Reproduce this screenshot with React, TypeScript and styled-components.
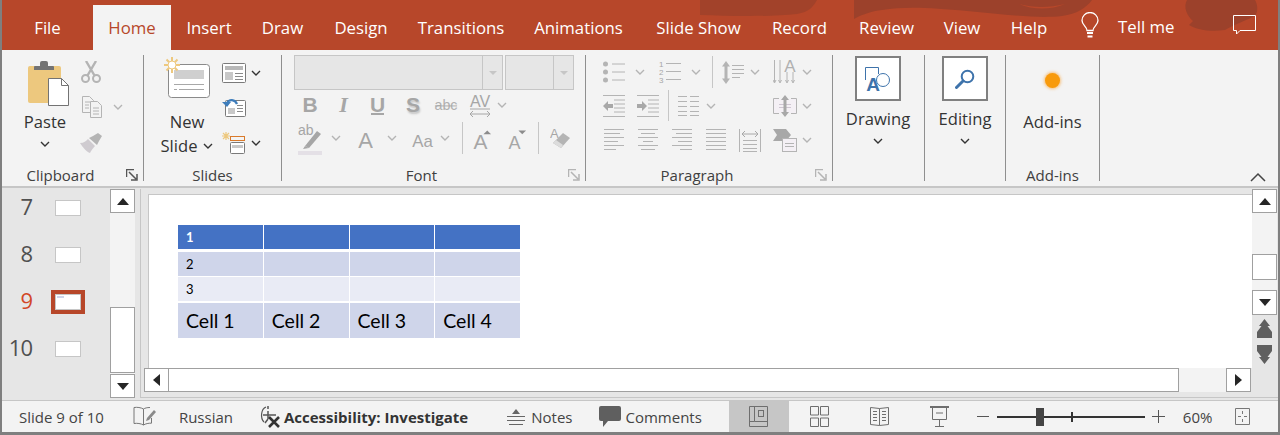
import styled, { createGlobalStyle } from "styled-components";

const UI_FONT = `"Open Sans", "Noto Sans", sans-serif`;
const OFF = "#b4b4b4";
const LINE = "#7a7a7a";

const GlobalStyle = createGlobalStyle`
	html, body {
		margin: 0;
		padding: 0;
		overflow: hidden;
		background: #f3f3f3;
	}
`;

const Window = styled.div`
	box-sizing: border-box;
	display: flex;
	flex-direction: column;
	width: 1280px;
	height: 435px;
	border: solid #7f7f7f;
	border-width: 0 2px 3px;
	font-family: ${UI_FONT};
	color: #3c3c3c;
	overflow: hidden;
`;

const TitleBar = styled.header`
	position: relative;
	display: flex;
	flex: none;
	height: 50px;
	background: #b7472a;
	overflow: hidden;
`;

const Blobs = styled.svg`
	position: absolute;
	left: 0;
	top: 0;
`;

const Tab = styled.div<{ $w: number; $active?: boolean }>`
	position: relative;
	width: ${({ $w }) => $w}px;
	height: 45px;
	margin-top: 5px;
	font-size: 16.8px;
	line-height: 46px;
	text-align: center;
	color: ${({ $active }) => ($active ? "#b7472a" : "#fff")};
	background: ${({ $active }) => ($active ? "#f3f3f3" : "transparent")};
`;

const TitleGlyph = styled.span<{ $ml: number }>`
	position: relative;
	display: flex;
	align-items: center;
	margin-left: ${({ $ml }) => $ml}px;
`;

const TellMe = styled.span`
	position: relative;
	width: 56px;
	margin-left: 19px;
	font-size: 16.8px;
	line-height: 54px;
	color: #fff;
	white-space: nowrap;
`;

const Ribbon = styled.div`
	display: flex;
	flex: none;
	box-sizing: border-box;
	height: 138px;
	background: #f3f3f3;
	border-bottom: 2px solid #c6c6c6;
`;

const Group = styled.section<{ $w: number }>`
	position: relative;
	box-sizing: border-box;
	display: flex;
	flex-direction: column;
	flex: none;
	width: ${({ $w }) => $w}px;
	height: 126px;
	margin-top: 5px;
	border-right: 1px solid #8f8f8f;
`;

const GroupBody = styled.div`
	display: flex;
	flex: 1;
	min-height: 0;
`;

const GroupStack = styled.div`
	display: flex;
	flex-direction: column;
	flex: 1;
`;

const GroupLabel = styled.div<{ $pr?: number }>`
	height: 12px;
	padding-right: ${({ $pr }) => $pr ?? 0}px;
	font-size: 15px;
	line-height: 12px;
	text-align: center;
	color: #404040;
	white-space: nowrap;
`;

const Launcher = styled.svg`
	position: absolute;
	right: 5px;
	bottom: 0;
`;

const BigButton = styled.div<{ $w: number; $ml: number }>`
	display: flex;
	flex-direction: column;
	align-items: center;
	flex: none;
	width: ${({ $w }) => $w}px;
	margin-left: ${({ $ml }) => $ml}px;
`;

const BigIcon = styled.div<{ $h: number; $top: number; $shift?: number }>`
	display: flex;
	align-items: center;
	justify-content: center;
	height: ${({ $h }) => $h}px;
	margin-top: ${({ $top }) => $top}px;
	margin-left: ${({ $shift }) => $shift ?? 0}px;
`;

const BigText = styled.div<{ $top?: number }>`
	display: flex;
	align-items: center;
	gap: 6px;
	height: 24px;
	margin-top: ${({ $top }) => $top ?? 0}px;
	font-size: 16.6px;
	line-height: 24px;
	color: #333;
	white-space: nowrap;
`;

const ChevronRow = styled.div<{ $top?: number }>`
	display: flex;
	justify-content: center;
	margin-top: ${({ $top }) => $top ?? 7}px;
`;

const ToolColumn = styled.div`
	display: flex;
	flex-direction: column;
	flex: none;
`;

const ToolRow = styled.div<{ $h: number }>`
	display: flex;
	align-items: center;
	height: ${({ $h }) => $h}px;
`;

const Tool = styled.span<{ $w: number; $ml?: number }>`
	display: flex;
	align-items: center;
	justify-content: center;
	flex: none;
	width: ${({ $w }) => $w}px;
	margin-left: ${({ $ml }) => $ml ?? 0}px;
`;

const Letter = styled(Tool)<{ $italic?: boolean; $serif?: boolean }>`
	font-family: ${({ $serif }) => ($serif ? `"Liberation Serif", serif` : `"Liberation Sans", sans-serif`)};
	font-size: ${({ $serif }) => ($serif ? 22 : 21)}px;
	font-weight: 700;
	font-style: ${({ $italic }) => ($italic ? "italic" : "normal")};
	line-height: 20px;
	color: #a6a6a6;
`;

const UnderLetter = styled(Letter)`
	border-bottom: 2px solid #a6a6a6;
	line-height: 17px;
	height: 17px;
`;

const ShadowLetter = styled(Letter)`
	text-shadow: 1px 2px 2px #c4c4c4;
`;

const ToolSep = styled.span<{ $ml: number; $h: number }>`
	flex: none;
	width: 1px;
	height: ${({ $h }) => $h}px;
	margin-left: ${({ $ml }) => $ml}px;
	background: #c6c6c6;
`;

const ComboRow = styled.div`
	display: flex;
	gap: 2px;
	height: 35px;
	padding-left: 12px;
`;

const Combo = styled.div<{ $w: number }>`
	box-sizing: border-box;
	display: flex;
	justify-content: flex-end;
	width: ${({ $w }) => $w}px;
	background: #e6e6e6;
	border: 1.5px solid #c6c6c6;
`;

const ComboArrow = styled.div`
	display: flex;
	align-items: center;
	justify-content: center;
	width: 19px;
	border-left: 1px solid #c6c6c6;
	&::after {
		content: "";
		border: solid transparent;
		border-width: 4px 4px 0;
		border-top-color: #c6c6c6;
	}
`;

const ShapeBox = styled.div`
	box-sizing: border-box;
	display: flex;
	align-items: center;
	justify-content: center;
	width: 46px;
	height: 45px;
	margin-top: 1px;
	background: #fff;
	border: 2px solid #808080;
`;

const AddInDot = styled.div`
	width: 15px;
	height: 15px;
	margin: 18px 0 22px;
	border-radius: 50%;
	background: #f89a0b;
	box-shadow: 0 0 3px 1px rgba(250, 170, 70, 0.7);
`;

const Collapse = styled.svg`
	position: absolute;
	left: 1249px;
	top: 172px;
`;

const Main = styled.main`
	display: flex;
	flex: 1;
	min-height: 0;
	background: #e6e6e6;
`;

const ThumbPanel = styled.nav`
	display: flex;
	flex-direction: column;
	flex: none;
	gap: 7px;
	width: 108px;
`;

const ThumbRow = styled.div`
	display: flex;
	align-items: center;
	height: 40px;
`;

const ThumbNumber = styled.span<{ $current?: boolean }>`
	width: 30px;
	font-size: 22px;
	line-height: 37px;
	height: 40px;
	text-align: right;
	letter-spacing: -1px;
	color: ${({ $current }) => ($current ? "#d24726" : "#505050")};
`;

const Thumb = styled.div<{ $current?: boolean }>`
	box-sizing: border-box;
	position: relative;
	width: 26px;
	height: 16px;
	margin-left: 23px;
	background: #fff;
	border: 1px solid #c6c6c6;
	outline: ${({ $current }) => ($current ? "4px solid #b7472a" : "none")};
	&::before {
		content: "";
		display: ${({ $current }) => ($current ? "block" : "none")};
		position: absolute;
		left: 1px;
		top: 1px;
		width: 7px;
		height: 2px;
		background: #cfd5ea;
	}
`;

const VScroll = styled.div`
	display: flex;
	flex-direction: column;
	flex: none;
	width: 25px;
	margin: 1px 0 2px;
`;

const ScrollTrack = styled.div`
	display: flex;
	flex-direction: column;
	justify-content: flex-end;
	flex: 1;
	padding-bottom: 1px;
	background: #f3f3f3;
`;

const ScrollButton = styled.div<{ $h?: number; $w?: number }>`
	box-sizing: border-box;
	display: flex;
	align-items: center;
	justify-content: center;
	flex: none;
	width: ${({ $w }) => ($w ? `${$w}px` : "100%")};
	height: ${({ $h }) => $h ?? 24}px;
	background: #fff;
	border: 1.5px solid #a0a0a0;
`;

const Workspace = styled.div`
	display: flex;
	flex-direction: column;
	flex: none;
	box-sizing: border-box;
	width: 1138px;
	height: 209px;
	margin: 1px 0 0 5px;
	border-left: 1px solid #c6c6c6;
	border-bottom: 1px solid #c6c6c6;
`;

const WorkspaceTop = styled.div`
	display: flex;
	height: 179px;
`;

const SlidePane = styled.div`
	box-sizing: border-box;
	flex: none;
	width: 1111px;
	padding: 5px 0 0 7px;
`;

const Slide = styled.div`
	box-sizing: border-box;
	height: 174px;
	padding: 30px 0 0 29px;
	background: #fff;
	border: solid #c6c6c6;
	border-width: 1px 0 0 1px;
`;

const DataTable = styled.table`
	width: 343px;
	border-collapse: separate;
	border-spacing: 0;
	table-layout: fixed;
	font-family: Lato, "Open Sans", sans-serif;
`;

const DataRow = styled.tr<{ $bg: string; $h: number; $gap: number }>`
	height: ${({ $h }) => $h}px;
	& > td {
		background: ${({ $bg }) => $bg};
		background-clip: padding-box;
		border-bottom: ${({ $gap }) => $gap}px solid #fff;
	}
`;

const DataCell = styled.td<{ $big?: boolean; $head?: boolean }>`
	box-sizing: border-box;
	padding: 0 0 0 8px;
	border-right: 1px solid #fff;
	font-size: ${({ $big }) => ($big ? 19.5 : 13)}px;
	font-weight: ${({ $head }) => ($head ? 700 : 400)};
	color: ${({ $head }) => ($head ? "#fff" : "#000")};
	line-height: 1;
`;

const RightBar = styled.div`
	display: flex;
	flex-direction: column;
	flex: none;
	width: 25px;
`;

const RightTrack = styled.div`
	display: flex;
	flex-direction: column;
	height: 77px;
	padding-top: 41px;
	box-sizing: border-box;
	background: #f3f3f3;
`;

const PageJump = styled.div`
	display: flex;
	flex-direction: column;
	align-items: center;
	gap: 7px;
	padding-top: 4px;
`;

const HScroll = styled.div`
	display: flex;
	height: 24px;
	padding-left: 3px;
`;

const HTrackWhite = styled.div`
	box-sizing: border-box;
	width: 1010px;
	background: #fff;
	border: solid #a0a0a0;
	border-width: 1.5px 1.5px 1.5px 0;
`;

const HTrackRest = styled.div`
	width: 47px;
	background: #f3f3f3;
`;

const StatusBar = styled.footer`
	box-sizing: border-box;
	display: flex;
	align-items: center;
	flex: none;
	height: 32px;
	background: #f3f3f3;
	border-top: 1px solid #c6c6c6;
	font-size: 15px;
	color: #444;
`;

const StatusText = styled.span<{ $ml?: number; $bold?: boolean }>`
	margin-left: ${({ $ml }) => $ml ?? 0}px;
	font-weight: ${({ $bold }) => ($bold ? 700 : 400)};
	color: ${({ $bold }) => ($bold ? "#333" : "#444")};
	white-space: nowrap;
`;

const StatusIcon = styled.span<{ $ml: number; $active?: boolean; $w?: number }>`
	display: flex;
	align-items: center;
	justify-content: center;
	flex: none;
	align-self: stretch;
	width: ${({ $w }) => ($w ? `${$w}px` : "auto")};
	margin-left: ${({ $ml }) => $ml}px;
	background: ${({ $active }) => ($active ? "#c6c6c6" : "transparent")};
`;

const ZoomSlider = styled.div`
	position: relative;
	flex: none;
	width: 148px;
	height: 2px;
	margin-left: 8px;
	background: #333;
`;

const ZoomThumb = styled.div`
	position: absolute;
	left: 39px;
	top: -8px;
	width: 8px;
	height: 18px;
	background: #444;
`;

const ZoomTick = styled.div`
	position: absolute;
	left: 74px;
	top: -4px;
	width: 2px;
	height: 10px;
	background: #333;
`;

const Chevron = ({ off }: { off?: boolean }) => (
	<svg width="10" height="6" viewBox="0 0 10 6">
		<path d="M1 1l4 4 4-4" fill="none" stroke={off ? OFF : "#333"} strokeWidth="1.4" />
	</svg>
);

const Tri = ({ dir }: { dir: "up" | "down" | "left" | "right" }) => {
	const d = { up: "M0 7L6 0l6 7z", down: "M0 0h12L6 7z", left: "M7 0v12L0 6z", right: "M0 0l7 6-7 6z" }[dir];
	const vertical = dir === "up" || dir === "down";
	return (
		<svg width={vertical ? 12 : 7} height={vertical ? 7 : 12} viewBox={vertical ? "0 0 12 7" : "0 0 7 12"}>
			<path d={d} fill="#262626" />
		</svg>
	);
};

const PasteIcon = () => (
	<svg width="41" height="45" viewBox="0 0 41 45">
		<rect x="0" y="5" width="33" height="37" rx="2" fill="#edc87e" />
		<path d="M6 9V6a1 1 0 0 1 1-1h5V2a2 2 0 0 1 2-2h4a2 2 0 0 1 2 2v3h5a1 1 0 0 1 1 1v3z" fill="#737373" />
		<path d="M20.500 17.500h13l7 7v20h-20z" fill="#fff" stroke="#737373" />
		<path d="M33.500 17.500v7h7" fill="none" stroke="#737373" />
	</svg>
);

const ScissorsIcon = () => (
	<svg width="20" height="22" viewBox="0 0 20 22">
		<g fill="none" stroke={OFF} strokeWidth="2">
			<circle cx="4.500" cy="17.500" r="3.500" />
			<circle cx="15.500" cy="17.500" r="3.500" />
			<path d="M6.500 14.500L15 0M13.500 14.500L5 0" strokeWidth="2.400" />
		</g>
	</svg>
);

const CopyIcon = () => (
	<svg width="20" height="22" viewBox="0 0 20 22">
		<g fill="#f3f3f3" stroke={OFF}>
			<path d="M.5.500h7l4 4v12H.5z" />
			<path d="M8.500 5.500h7l4 4v12h-11z" />
			<path d="M3 6h5M3 9h4M3 12h4M11 12h6M11 15h6M11 18h6" fill="none" />
		</g>
	</svg>
);

const BrushIcon = () => (
	<svg width="23" height="20" viewBox="0 0 23 20">
		<path d="M0 10c4 0 6-2 8-4l7 7c-2 2-4 5-5 7-3-1-7-5-10-10z" fill="#cfcbd0" />
		<path d="M9 5l4-2 5-3 4 3-3 5-2 4z" fill={OFF} />
	</svg>
);

const NewSlideIcon = () => (
	<svg width="46" height="42" viewBox="0 0 46 42">
		<rect x="4.500" y="7.500" width="41" height="33" rx="3" fill="#fff" stroke="#8a8a8a" />
		<rect x="10" y="13" width="30" height="9" fill="#cfcfcf" />
		<path d="M10 27.500h30M10 32.500h3M15 32.500h25" stroke="#a8a8a8" />
		<g stroke="#edc87e" strokeWidth="2">
			<path d="M8 0v16M0 8h16M2.500 2.500l11 11M13.500 2.500l-11 11" />
		</g>
		<circle cx="8" cy="8" r="4" fill="#fff" stroke="#edc87e" />
	</svg>
);

const LayoutIcon = () => (
	<svg width="24" height="20" viewBox="0 0 24 20">
		<rect x=".5" y=".5" width="23" height="19" rx="1" fill="#fff" stroke={LINE} />
		<rect x="3" y="3" width="18" height="4" fill="#b8b8b8" />
		<rect x="3" y="9" width="8" height="8" fill="#c8c8c8" />
		<path d="M13 10.500h8M13 13.500h8M13 16.500h8" stroke="#8a8a8a" />
	</svg>
);

const ResetIcon = () => (
	<svg width="24" height="20" viewBox="0 0 24 20">
		<rect x="3.500" y="3.500" width="20" height="16" rx="1" fill="#fff" stroke={LINE} />
		<rect x="6" y="11" width="7" height="6" fill="#c8c8c8" />
		<path d="M15 8.500h6M15 11.500h6M15 14.500h6" stroke="#8a8a8a" />
		<path d="M15 7C13 2 7 2 5 6" fill="none" stroke="#3e7dbb" strokeWidth="2.200" />
		<path d="M0 5h9L5 10z" fill="#3e7dbb" />
	</svg>
);

const SectionIcon = () => (
	<svg width="23" height="22" viewBox="0 0 23 22">
		<path d="M4 0v8M0 4h8M1 1l6 6M7 1L1 7" stroke="#edc87e" strokeWidth="1.200" />
		<rect x="8.500" y="4.500" width="14" height="4" fill="none" stroke="#d97a2b" />
		<rect x="8.500" y="10.500" width="14" height="11" rx="1" fill="#fff" stroke={LINE} />
		<rect x="10" y="13" width="11" height="3" fill="#c8c8c8" />
	</svg>
);

const AvIcon = () => (
	<svg width="22" height="26" viewBox="0 0 22 26">
		<text x="11" y="15" textAnchor="middle" fontSize="16" fontFamily="Liberation Sans" fill="#a6a6a6">AV</text>
		<path d="M1 17h20" stroke="#a6a6a6" />
		<path d="M4 19l-3 3 3 3M18 19l3 3-3 3M1 22h20" fill="none" stroke="#a6a6a6" />
	</svg>
);

const AbcIcon = () => (
	<svg width="26" height="20" viewBox="0 0 26 20">
		<text x="13" y="15" textAnchor="middle" fontSize="15.500" fontFamily="Liberation Sans" fill="#b0b0b0">abc</text>
		<path d="M1 11h24" stroke="#a6a6a6" />
	</svg>
);

const HighlightIcon = () => (
	<svg width="24" height="34" viewBox="0 0 24 34">
		<text x="0" y="14" fontSize="14" fontFamily="Liberation Sans" fill="#a6a6a6">ab</text>
		<path d="M7 25L19 10l4 3-12 14z" fill="#a6a6a6" />
		<path d="M5 28l2-3 4 2z" fill="#a6a6a6" />
		<rect x="0" y="30" width="24" height="4" fill="#e4e0e6" />
	</svg>
);

const FontAIcon = ({ label = "A", w = 15, size = 22 }: { label?: string; w?: number; size?: number }) => (
	<svg width={w} height="32" viewBox={`0 0 ${w} 32`}>
		<text x={w / 2} y="26" textAnchor="middle" fontSize={size} fontFamily="Liberation Sans" fill="#a6a6a6">{label}</text>
	</svg>
);

const GrowIcon = ({ grow }: { grow?: boolean }) => (
	<svg width="20" height="34" viewBox="0 0 20 34">
		<text x="0.500" y="29" fontSize={grow ? 22 : 19} fontFamily="Liberation Sans" fill="#a6a6a6">A</text>
		<path d={grow ? "M11 13l4-4 4 4z" : "M11 9h8l-4 4z"} fill="#8c8c8c" />
	</svg>
);

const EraserIcon = () => (
	<svg width="20" height="28" viewBox="0 0 20 28">
		<text x="0" y="14" fontSize="13" fontFamily="Liberation Sans" fill="#a6a6a6">A</text>
		<path d="M3 19l10-10 7 5-9 10z" fill="#b4b4b4" />
		<path d="M3 19l3-3 7 5-2 3z" fill="#dcdcdc" />
	</svg>
);

const BulletsIcon = () => (
	<svg width="22" height="22" viewBox="0 0 22 22">
		<circle cx="2.500" cy="3" r="2.500" fill={OFF} />
		<circle cx="2.500" cy="11" r="2.500" fill={OFF} />
		<circle cx="2.500" cy="19" r="2.500" fill={OFF} />
		<path d="M9 3h13M9 11h13M9 19h13" stroke={OFF} />
	</svg>
);

const NumberedIcon = () => (
	<svg width="22" height="26" viewBox="0 0 22 26">
		<g fontSize="8" fontFamily="Liberation Sans" fill="#a6a6a6">
			<text x="0" y="8">1</text>
			<text x="0" y="16">2</text>
			<text x="0" y="24">3</text>
		</g>
		<path d="M7 4.500h15M7 12.500h15M7 20.500h15" stroke={OFF} />
	</svg>
);

const LineSpacingIcon = () => (
	<svg width="23" height="23" viewBox="0 0 23 23">
		<path d="M4 0l4 5.500H5.500v12H8L4 23l-4-5.500h2.500v-12H0z" fill={OFF} />
		<path d="M10 4.500h12M10 8.500h12M10 12.500h12M10 16.500h8" stroke={OFF} />
	</svg>
);

const TextDirIcon = () => (
	<svg width="24" height="32" viewBox="0 -4 24 32">
		<path d="M1.500 0v22M7 0v22M14 12v10M20 12v10" stroke={OFF} />
		<path d="M0 20l1.500 3 1.500-3M5.500 20L7 23l1.500-3M12.500 20l1.500 3 1.500-3M18.500 20l1.500 3 1.500-3" fill="none" stroke={OFF} />
		<text x="17" y="12" textAnchor="middle" fontSize="17" fontFamily="Liberation Sans" fill="#b0b0b0">A</text>
	</svg>
);

const IndentIcon = ({ out }: { out?: boolean }) => (
	<svg width="22" height="22" viewBox="0 0 22 22">
		<path d="M0 .5h22M0 21.500h22M11 5h11M11 9h11M11 13h11M11 17h11" stroke={OFF} />
		<path d={out ? "M0 11l5-5v3h5v4H5v3z" : "M10 11L5 6v3H0v4h5v3z"} fill="#a8a8a8" />
	</svg>
);

const ColumnsIcon = () => (
	<svg width="21" height="22" viewBox="0 0 21 22">
		<path d="M0 1.500h9M12 1.500h9M0 6.500h9M12 6.500h9M0 11.500h9M12 11.500h9M0 16.500h9M12 16.500h9M0 20.500h9M12 20.500h9" stroke={OFF} />
	</svg>
);

const AlignTextIcon = () => (
	<svg width="24" height="22" viewBox="0 0 24 22">
		<rect x="1" y="4" width="22" height="14" fill="#f4f0f5" />
		<path d="M6 3.500H.5v15H6M18 3.500h5.500v15H18" fill="none" stroke={OFF} />
		<path d="M6 9.500h12M6 12.500h12" stroke="#cfc6d2" />
		<path d="M12 0l4 5h-2.500v12H16l-4 5-4-5h2.500V5H8z" fill="#a8a8a8" />
	</svg>
);

const ParaAlignIcon = ({ kind }: { kind: "left" | "center" | "right" | "justify" }) => {
	const short = {
		left: "M0 4.500h16M0 12.500h14M0 20.500h12",
		center: "M3 4.500h14M5 12.500h10M3 20.500h14",
		right: "M4 4.500h16M6 12.500h14M8 20.500h12",
		justify: "M0 4.500h20M0 12.500h20M0 20.500h20",
	}[kind];
	return (
		<svg width="20" height="23" viewBox="0 0 20 23">
			<path d={`M0 .5h20M0 8.500h20M0 16.500h20 ${short}`} stroke={OFF} />
		</svg>
	);
};

const DistributeIcon = () => (
	<svg width="22" height="23" viewBox="0 0 22 23">
		<path d="M.5 0v23M21.500 0v23M4 11.500h14M4 15.500h14M4 19.500h14M4 22.500h14" stroke={OFF} />
		<path d="M3 5h16M6 2L3 5l3 3M16 2l3 3-3 3" fill="none" stroke="#a8a8a8" />
	</svg>
);

const SmartArtIcon = () => (
	<svg width="24" height="23" viewBox="0 0 24 23">
		<path d="M0 0h13l5 6-5 6H0l4-6z" fill="#a8a8a8" />
		<rect x="9.500" y="9.500" width="14" height="13" fill="#f4f0f5" stroke={OFF} />
		<path d="M12 14.500h9M12 17.500h9" stroke={OFF} />
	</svg>
);

const DrawingIcon = () => (
	<svg width="26" height="32" viewBox="0 -4 26 32">
		<path d="M.5 13V.5h13V7" fill="none" stroke="#3e73ab" />
		<circle cx="18" cy="13" r="6.500" fill="none" stroke="#3e73ab" />
		<text x="8" y="23.500" textAnchor="middle" fontSize="19" fontWeight="700" fontFamily="Liberation Sans" fill="#3e73ab">A</text>
	</svg>
);

const SearchIcon = () => (
	<svg width="20" height="20" viewBox="0 0 20 20">
		<circle cx="12.500" cy="7.500" r="5.800" fill="none" stroke="#3e73ab" strokeWidth="2" />
		<path d="M8 12L1.500 18.500" stroke="#3e73ab" strokeWidth="3" strokeLinecap="round" />
	</svg>
);

const BulbIcon = () => (
	<svg width="18" height="26" viewBox="0 0 18 26">
		<path d="M6 18.500c0-4-5-5.500-5-10a8 8 0 0 1 16 0c0 4.500-5 6-5 10z" fill="none" stroke="#fff" strokeWidth="1.300" />
		<path d="M6 21h6M6.500 24.500h5" stroke="#fff" strokeWidth="1.800" />
	</svg>
);

const SpeechIcon = () => (
	<svg width="23" height="20" viewBox="0 0 23 20">
		<path d="M.5.500h22v15H7L3.500 19v-3.500h-3z" fill="none" stroke="#fff" />
	</svg>
);

const JumpIcon = ({ up }: { up?: boolean }) => (
	<svg width="15" height="19" viewBox="0 0 15 19">
		<path
			d={up ? "M7.500 0L13 7h-2.500L15 13v6H0v-6l4.500-6H2z" : "M7.500 19L2 12h2.500L0 6V0h15v6l-4.500 6H13z"}
			fill="#5f5f5f"
		/>
	</svg>
);

const BookEditIcon = () => (
	<svg width="23" height="21" viewBox="0 0 23 21">
		<path d="M10.500 3C8 1.500 4 1 1 1.500v16c3-.5 7 0 9.500 1.500 2-1.200 5-2 8-1.800V12M10.500 3v16M10.500 3C12 2 14 1.500 17 1.500" fill="none" stroke="#777" />
		<path d="M14 12l7-8 2 2-7 8-3 1z" fill="#8a8a8a" />
	</svg>
);

const AccessibilityIcon = () => (
	<svg width="21" height="22" viewBox="0 0 21 22">
		<path d="M7 1C2 3 1 12 5 16" fill="none" stroke="#555" strokeWidth="1.200" />
		<path d="M9 0v3M9 5v8M4 9h13M9 13l-3 4" fill="none" stroke="#555" strokeWidth="1.500" />
		<path d="M10 11l10 10M20 11L10 21" stroke="#333" strokeWidth="2.600" />
	</svg>
);

const NotesIcon = () => (
	<svg width="18" height="18" viewBox="0 0 18 18">
		<path d="M9 1l4 5H5z" fill="#666" />
		<path d="M0 8.500h18M0 12.500h18M2 16.500h14" stroke="#666" />
	</svg>
);

const CommentsIcon = () => (
	<svg width="22" height="21" viewBox="0 0 22 21">
		<path d="M2 0h18a2 2 0 0 1 2 2v11a2 2 0 0 1-2 2H9l-5 6v-6H2a2 2 0 0 1-2-2V2a2 2 0 0 1 2-2z" fill="#5f5f5f" />
	</svg>
);

const NormalViewIcon = () => (
	<svg width="19" height="21" viewBox="0 0 19 21">
		<path d="M.5.500h18v20H.5zM5.500.5v15h13M5.500 15.500H.5" fill="none" stroke="#6e6e6e" />
		<rect x="9.500" y="4.500" width="5" height="6" fill="none" stroke="#6e6e6e" />
	</svg>
);

const SorterIcon = () => (
	<svg width="19" height="21" viewBox="0 0 19 21">
		<path d="M.5.500h8v8.500h-8zM10.500.5h8v8.500h-8zM.5 12h8v8.500h-8zM10.500 12h8v8.500h-8z" fill="none" stroke="#6e6e6e" />
	</svg>
);

const ReadingIcon = () => (
	<svg width="19" height="21" viewBox="0 0 19 21">
		<path d="M.5 1.500l9 1 9-1v17l-9 1-9-1zM9.500 2.500v17M3 5.500h4M3 8.500h4M3 11.500h4M3 14.500h4M12 5.500h4M12 8.500h4M12 11.500h4M12 14.500h4" fill="none" stroke="#6e6e6e" />
	</svg>
);

const ShowIcon = () => (
	<svg width="19" height="21" viewBox="0 0 19 21">
		<path d="M0 1h19" stroke="#6e6e6e" strokeWidth="2" />
		<path d="M2.500 2v11.500h14V2M6 7h7M9.500 13.500v6.500M5 20.500h9" fill="none" stroke="#6e6e6e" />
	</svg>
);

const ZoomMinusIcon = () => (
	<svg width="12" height="3" viewBox="0 0 12 3">
		<path d="M0 1.500h12" stroke="#555" />
	</svg>
);

const ZoomPlusIcon = () => (
	<svg width="13" height="13" viewBox="0 0 13 13">
		<path d="M0 6.500h13M6.500 0v13" stroke="#555" />
	</svg>
);

const FitIcon = () => (
	<svg width="15" height="17" viewBox="0 0 15 17">
		<path d="M.5.500h14v16H.5zM7.500 3v3M7.500 11v3M3 8.500h3M9 8.500h3" fill="none" stroke="#777" />
	</svg>
);

const TABS: [string, number][] = [
	["Insert", 76],
	["Draw", 71],
	["Design", 86],
	["Transitions", 114],
	["Animations", 121],
	["Slide Show", 119],
	["Record", 83],
	["Review", 91],
	["View", 60],
	["Help", 74],
];

const THUMBS = [7, 8, 9, 10];
const COLUMNS = [0, 1, 2, 3];

const App = () => (
	<>
		<GlobalStyle />
		<Window>
			<TitleBar>
				<Blobs width="1276" height="50" viewBox="0 0 1276 50">
					<g fill="#9c412b">
						<path d="M698 0h117c-4 7-8 12-20 14-30 3-67 2-97 1z" opacity=".8" />
						<path d="M852 0h238c-6 8-15 14-30 16-25 3-60-2-95-5-35-3-60-5-85-1-15 2-22 6-28 9z" />
						<path d="M1185 0h68c3 5 3 12 0 16-10 5-22 9-30 14-14 2-28 0-36-5l4-4c-6-5-10-14-6-21z" />
					</g>
					<path d="M1017 4c15 4 30 4 46 0-14 6-32 6-46 0z" fill="#b7472a" />
				</Blobs>
				<Tab $w={91}>File</Tab>
				<Tab $w={78} $active>Home</Tab>
				{TABS.map(([name, w]) => (
					<Tab key={name} $w={w}>{name}</Tab>
				))}
				<TitleGlyph $ml={15}><BulbIcon /></TitleGlyph>
				<TellMe>Tell me</TellMe>
				<TitleGlyph $ml={59}><SpeechIcon /></TitleGlyph>
			</TitleBar>

			<Ribbon>
				<Group $w={142}>
					<GroupBody>
						<BigButton $w={70} $ml={8}>
							<BigIcon $h={45} $top={6} $shift={6}><PasteIcon /></BigIcon>
							<BigText $top={4}>Paste</BigText>
							<ChevronRow $top={7}><Chevron /></ChevronRow>
						</BigButton>
						<ToolColumn>
							<ToolRow $h={34}><Tool $w={20} $ml={1}><ScissorsIcon /></Tool></ToolRow>
							<ToolRow $h={36}>
								<Tool $w={20} $ml={2}><CopyIcon /></Tool>
								<Tool $w={10} $ml={11}><Chevron off /></Tool>
							</ToolRow>
							<ToolRow $h={36}><Tool $w={23}><BrushIcon /></Tool></ToolRow>
						</ToolColumn>
					</GroupBody>
					<GroupLabel $pr={24}>Clipboard</GroupLabel>
					<Launcher width="12" height="12" viewBox="0 0 12 12">
						<path d="M.5 8V.5H8M3 3l7 7M11 5v6H5" fill="none" stroke="#555" strokeWidth="1.500" />
					</Launcher>
				</Group>

				<Group $w={138}>
					<GroupBody>
						<BigButton $w={66} $ml={10}>
							<BigIcon $h={42} $top={2}><NewSlideIcon /></BigIcon>
							<BigText $top={11}>New</BigText>
							<BigText><span>Slide</span><Chevron /></BigText>
						</BigButton>
						<ToolColumn>
							<ToolRow $h={35}>
								<Tool $w={24} $ml={2}><LayoutIcon /></Tool>
								<Tool $w={10} $ml={5}><Chevron /></Tool>
							</ToolRow>
							<ToolRow $h={34}><Tool $w={24} $ml={2}><ResetIcon /></Tool></ToolRow>
							<ToolRow $h={37}>
								<Tool $w={23} $ml={2}><SectionIcon /></Tool>
								<Tool $w={10} $ml={6}><Chevron /></Tool>
							</ToolRow>
						</ToolColumn>
					</GroupBody>
					<GroupLabel>Slides</GroupLabel>
				</Group>

				<Group $w={304}>
					<GroupStack>
						<ComboRow>
							<Combo $w={209}><ComboArrow /></Combo>
							<Combo $w={69}><ComboArrow /></Combo>
						</ComboRow>
						<ToolRow $h={30}>
							<Letter $w={14} $ml={21}>B</Letter>
							<Letter $w={11} $ml={21} $italic $serif>I</Letter>
							<UnderLetter $w={13} $ml={22}>U</UnderLetter>
							<ShadowLetter $w={14} $ml={22}>S</ShadowLetter>
							<Tool $w={24} $ml={14}><AbcIcon /></Tool>
							<Tool $w={22} $ml={11}><AvIcon /></Tool>
							<Tool $w={10} $ml={6}><Chevron off /></Tool>
						</ToolRow>
						<ToolRow $h={36}>
							<Tool $w={24} $ml={16}><HighlightIcon /></Tool>
							<Tool $w={10} $ml={9}><Chevron off /></Tool>
							<Tool $w={15} $ml={17}><FontAIcon /></Tool>
							<Tool $w={10} $ml={14}><Chevron off /></Tool>
							<Tool $w={23} $ml={14}><FontAIcon label="Aa" w={26} size={19} /></Tool>
							<Tool $w={10} $ml={6}><Chevron off /></Tool>
							<ToolSep $ml={12} $h={32} />
							<Tool $w={19} $ml={10}><GrowIcon grow /></Tool>
							<Tool $w={19} $ml={16}><GrowIcon /></Tool>
							<ToolSep $ml={11} $h={32} />
							<Tool $w={20} $ml={11}><EraserIcon /></Tool>
						</ToolRow>
					</GroupStack>
					<GroupLabel $pr={24}>Font</GroupLabel>
					<Launcher width="12" height="12" viewBox="0 0 12 12">
						<path d="M.5 8V.5H8M3 3l7 7M11 5v6H5" fill="none" stroke={OFF} strokeWidth="1.500" />
					</Launcher>
				</Group>

				<Group $w={247}>
					<GroupStack>
						<ToolRow $h={34}>
							<Tool $w={22} $ml={17}><BulletsIcon /></Tool>
							<Tool $w={10} $ml={10}><Chevron off /></Tool>
							<Tool $w={22} $ml={14}><NumberedIcon /></Tool>
							<Tool $w={10} $ml={10}><Chevron off /></Tool>
							<ToolSep $ml={11} $h={32} />
							<Tool $w={23} $ml={9}><LineSpacingIcon /></Tool>
							<Tool $w={10} $ml={5}><Chevron off /></Tool>
							<Tool $w={24} $ml={13}><TextDirIcon /></Tool>
							<Tool $w={10} $ml={5}><Chevron off /></Tool>
						</ToolRow>
						<ToolRow $h={33}>
							<Tool $w={22} $ml={17}><IndentIcon out /></Tool>
							<Tool $w={22} $ml={12}><IndentIcon /></Tool>
							<ToolSep $ml={9} $h={31} />
							<Tool $w={21} $ml={9}><ColumnsIcon /></Tool>
							<Tool $w={10} $ml={7}><Chevron off /></Tool>
							<Tool $w={24} $ml={57}><AlignTextIcon /></Tool>
							<Tool $w={10} $ml={5}><Chevron off /></Tool>
						</ToolRow>
						<ToolRow $h={36}>
							<Tool $w={20} $ml={18}><ParaAlignIcon kind="left" /></Tool>
							<Tool $w={20} $ml={14}><ParaAlignIcon kind="center" /></Tool>
							<Tool $w={20} $ml={14}><ParaAlignIcon kind="right" /></Tool>
							<Tool $w={20} $ml={14}><ParaAlignIcon kind="justify" /></Tool>
							<Tool $w={22} $ml={13}><DistributeIcon /></Tool>
							<Tool $w={24} $ml={12}><SmartArtIcon /></Tool>
							<Tool $w={10} $ml={5}><Chevron off /></Tool>
						</ToolRow>
					</GroupStack>
					<GroupLabel $pr={24}>Paragraph</GroupLabel>
					<Launcher width="12" height="12" viewBox="0 0 12 12">
						<path d="M.5 8V.5H8M3 3l7 7M11 5v6H5" fill="none" stroke={OFF} strokeWidth="1.500" />
					</Launcher>
				</Group>

				<Group $w={92}>
					<BigButton $w={90} $ml={0}>
						<ShapeBox><DrawingIcon /></ShapeBox>
						<BigText $top={6}>Drawing</BigText>
						<ChevronRow $top={7}><Chevron /></ChevronRow>
					</BigButton>
				</Group>

				<Group $w={81}>
					<BigButton $w={80} $ml={0}>
						<ShapeBox><SearchIcon /></ShapeBox>
						<BigText $top={6}>Editing</BigText>
						<ChevronRow $top={7}><Chevron /></ChevronRow>
					</BigButton>
				</Group>

				<Group $w={94}>
					<GroupBody>
						<BigButton $w={93} $ml={0}>
							<AddInDot />
							<BigText>Add-ins</BigText>
						</BigButton>
					</GroupBody>
					<GroupLabel>Add-ins</GroupLabel>
				</Group>
				<Collapse width="18" height="10" viewBox="0 0 18 10">
					<path d="M2 9l7-7 7 7" fill="none" stroke="#444" strokeWidth="1.500" />
				</Collapse>
			</Ribbon>

			<Main>
				<ThumbPanel>
					{THUMBS.map((n) => (
						<ThumbRow key={n}>
							<ThumbNumber $current={n === 9}>{n}</ThumbNumber>
							<Thumb $current={n === 9} />
						</ThumbRow>
					))}
				</ThumbPanel>
				<VScroll>
					<ScrollButton><Tri dir="up" /></ScrollButton>
					<ScrollTrack>
						<ScrollButton $h={66} />
					</ScrollTrack>
					<ScrollButton><Tri dir="down" /></ScrollButton>
				</VScroll>
				<Workspace>
					<WorkspaceTop>
						<SlidePane>
							<Slide>
								<DataTable>
									<tbody>
										<DataRow $bg="#4472c4" $h={27} $gap={3}>
											{COLUMNS.map((c) => (
												<DataCell key={c} $head>{c === 0 ? "1" : ""}</DataCell>
											))}
										</DataRow>
										<DataRow $bg="#cfd5ea" $h={25} $gap={1}>
											{COLUMNS.map((c) => (
												<DataCell key={c}>{c === 0 ? "2" : ""}</DataCell>
											))}
										</DataRow>
										<DataRow $bg="#e9ebf5" $h={26} $gap={2}>
											{COLUMNS.map((c) => (
												<DataCell key={c}>{c === 0 ? "3" : ""}</DataCell>
											))}
										</DataRow>
										<DataRow $bg="#cfd5ea" $h={35} $gap={0}>
											{COLUMNS.map((c) => (
												<DataCell key={c} $big>{`Cell ${c + 1}`}</DataCell>
											))}
										</DataRow>
									</tbody>
								</DataTable>
							</Slide>
						</SlidePane>
						<RightBar>
							<ScrollButton><Tri dir="up" /></ScrollButton>
							<RightTrack>
								<ScrollButton $h={26} />
							</RightTrack>
							<ScrollButton $h={25}><Tri dir="down" /></ScrollButton>
							<PageJump>
								<JumpIcon up />
								<JumpIcon />
							</PageJump>
						</RightBar>
					</WorkspaceTop>
					<HScroll>
						<ScrollButton $w={25}><Tri dir="left" /></ScrollButton>
						<HTrackWhite />
						<HTrackRest />
						<ScrollButton $w={25}><Tri dir="right" /></ScrollButton>
					</HScroll>
				</Workspace>
			</Main>

			<StatusBar>
				<StatusText $ml={17}>Slide 9 of 10</StatusText>
				<StatusIcon $ml={29}><BookEditIcon /></StatusIcon>
				<StatusText $ml={23}>Russian</StatusText>
				<StatusIcon $ml={26}><AccessibilityIcon /></StatusIcon>
				<StatusText $ml={4} $bold>Accessibility: Investigate</StatusText>
				<StatusIcon $ml={39}><NotesIcon /></StatusIcon>
				<StatusText $ml={6}>Notes</StatusText>
				<StatusIcon $ml={27}><CommentsIcon /></StatusIcon>
				<StatusText $ml={4}>Comments</StatusText>
				<StatusIcon $ml={27} $w={60} $active><NormalViewIcon /></StatusIcon>
				<StatusIcon $ml={21}><SorterIcon /></StatusIcon>
				<StatusIcon $ml={41}><ReadingIcon /></StatusIcon>
				<StatusIcon $ml={41}><ShowIcon /></StatusIcon>
				<StatusIcon $ml={28}><ZoomMinusIcon /></StatusIcon>
				<ZoomSlider>
					<ZoomThumb />
					<ZoomTick />
				</ZoomSlider>
				<StatusIcon $ml={7}><ZoomPlusIcon /></StatusIcon>
				<StatusText $ml={18}>60%</StatusText>
				<StatusIcon $ml={23}><FitIcon /></StatusIcon>
			</StatusBar>
		</Window>
	</>
);

export default App;
